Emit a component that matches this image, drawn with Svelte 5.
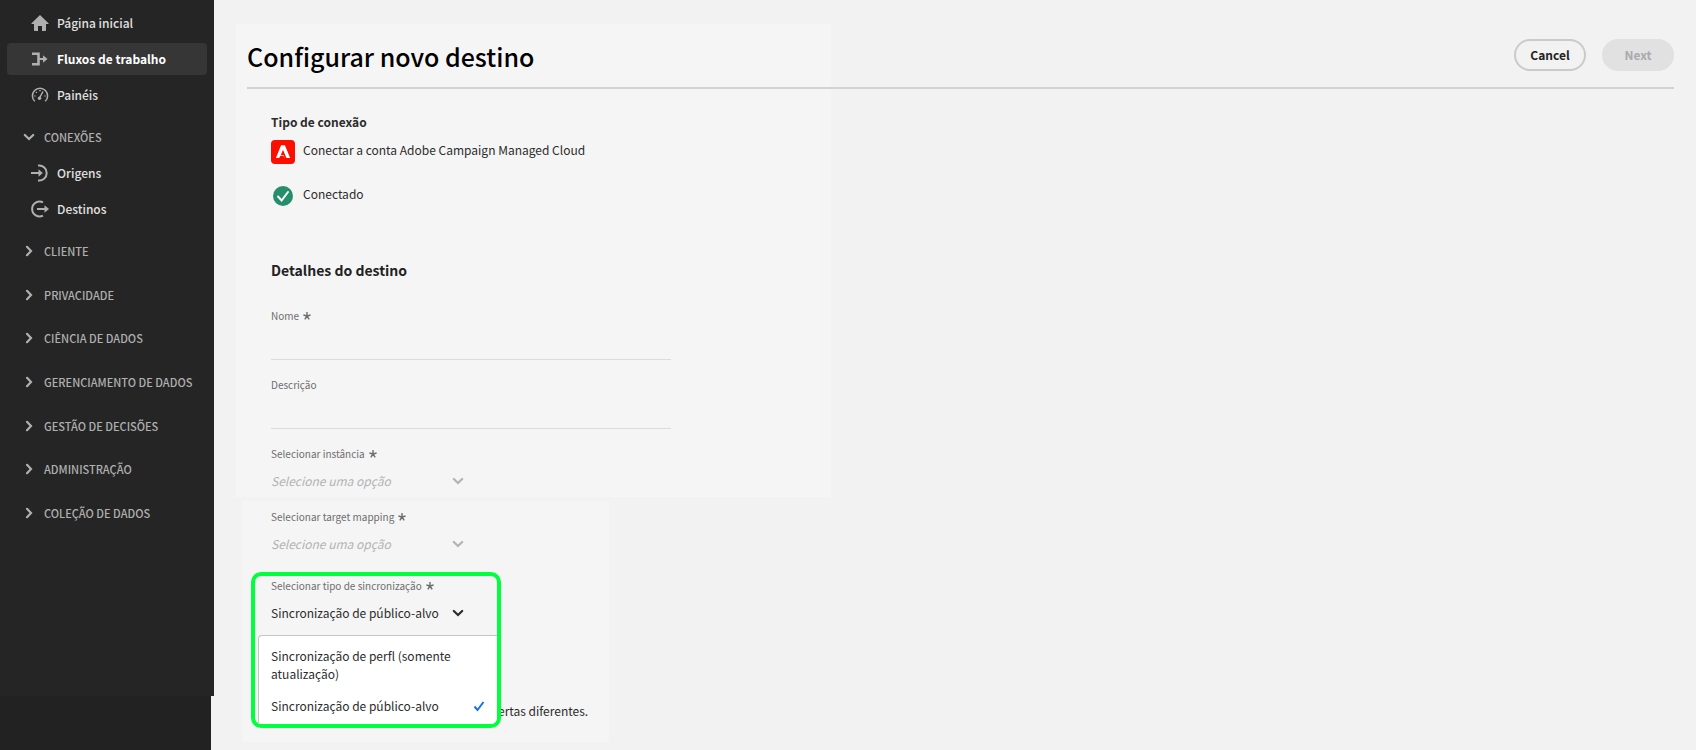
<script>
  const primary = [
    { name: 'Página inicial', icon: 'home' },
    { name: 'Fluxos de trabalho', icon: 'flow', active: true },
    { name: 'Painéis', icon: 'gauge' }
  ];
  const connections = [
    { name: 'Origens', icon: 'source' },
    { name: 'Destinos', icon: 'destination' }
  ];
  const sections = [
    'Cliente', 'Privacidade', 'Ciência de dados', 'Gerenciamento de dados',
    'Gestão de decisões', 'Administração', 'Coleção de dados'
  ];
  const options = ['Sincronização de perfl (somente atualização)', 'Sincronização de público-alvo'];
  let selected = $state(options[1]);
</script>

{#snippet chevron(dir)}
  <svg class="chevron {dir}" viewBox="0 0 12 12" aria-hidden="true"><path d="M1.800 4L6 8l4.200-4" /></svg>
{/snippet}

{#snippet star()}
  <svg class="star" viewBox="0 0 8 8" aria-hidden="true"><path d="M4 4V0M4 4L.4 3M4 4l3.6-1M4 4L1.8 7.4M4 4l2.2 3.4" /></svg>
{/snippet}

{#snippet navLink(item)}
  <a class="link" class:active={item.active} href="#{item.icon}">
    <svg class="icon" viewBox="0 0 18 18" aria-hidden="true">
      {#if item.icon === 'home'}
        <path class="solid" d="M9 1L.5 9.3c-.3.4-.1.8.4.8H3v6c0 .5.3.9.8.9H7v-5h4v5h3.200c.5 0 .8-.4.8-.9v-6h2.100c.5 0 .7-.4.4-.8z" />
      {:else if item.icon === 'flow'}
        <path class="thick" d="M1 3.800h6.500v10.400H1" /><path d="M8 9h5" /><path class="solid" d="M12 5.200L16.500 9 12 12.800z" />
      {:else if item.icon === 'gauge'}
        <path class="thin" d="M3.800 15.300A7.600 7.600 0 1 1 14.200 15.300M12 5.500L8.500 12M3.500 10h1M5 6l.8.7M9 4v1.200M13.500 10h1" /><circle class="solid" cx="8.500" cy="12.300" r="1.700" />
      {:else if item.icon === 'source'}
        <path d="M7 1.600a7.500 7.500 0 1 1 0 14.800M0 9h9" /><path class="solid" d="M7.500 5.200L11.800 9l-4.300 3.800z" />
      {:else}
        <path d="M12 2.300a7.500 7.500 0 1 0 0 13.400M6 9h9" /><path class="solid" d="M13.500 5.200L18 9l-4.500 3.800z" />
      {/if}
    </svg>
    <span>{item.name}</span>
  </a>
{/snippet}

<div class="page">
  <div class="side">
    <nav>
      {#each primary as item}{@render navLink(item)}{/each}
      <button class="section open">{@render chevron('down')}<span>Conexões</span></button>
      {#each connections as item}{@render navLink(item)}{/each}
      <div class="sections">
        {#each sections as name}
          <button class="section">{@render chevron('right')}<span>{name}</span></button>
        {/each}
      </div>
    </nav>
    <div class="foot"></div>
  </div>

  <main>
    <div class="tint upper"></div>
    <div class="tint lower"></div>
    <header>
      <h1>Configurar novo destino</h1>
      <div class="actions">
        <button class="pill">Cancel</button>
        <button class="pill next" disabled>Next</button>
      </div>
    </header>

    <div class="body">
      <h2>Tipo de conexão</h2>
      <div class="status">
        <svg class="badge" viewBox="0 0 24 24" aria-hidden="true">
          <rect width="24" height="24" rx="4" fill="#fa0f00" />
          <path fill="#fff" d="M10.100 5.300h3.800L19.200 18h-3.400c-.3 0-.5-.1-.6-.4L12.100 10c0-.1-.2-.1-.2 0l-2 4.800c0 .1 0 .2.200.2h2.100c.2 0 .3.100.3.200l.9 2.200c.1.300-.1.600-.4.600l-4.300-.5-.5.500H4.900z" />
          <path fill="#fa0f00" d="M9.300 15.800h3l1.600 2.700H8.200z" />
        </svg>
        <span>Conectar a conta Adobe Campaign Managed Cloud</span>
      </div>
      <div class="status connected">
        <svg class="badge" viewBox="0 0 24 24" aria-hidden="true">
          <circle cx="12" cy="12" r="10" fill="#268e6c" />
          <path d="M7 12.500l3.600 4 6.400-8.500" fill="none" stroke="#fff" stroke-width="2" stroke-linecap="round" />
        </svg>
        <span>Conectado</span>
      </div>

      <h3>Detalhes do destino</h3>
      <form>
        <div class="field text">
          <label for="name">Nome {@render star()}</label>
          <input id="name" type="text" />
        </div>
        <div class="field text">
          <label for="description">Descrição</label>
          <input id="description" type="text" />
        </div>
        <div class="field choice">
          <label for="instance">Selecionar instância {@render star()}</label>
          <div class="picker">
            <select id="instance"><option>Selecione uma opção</option></select>
            {@render chevron('down')}
          </div>
        </div>
        <div class="field choice wide">
          <label for="mapping">Selecionar target mapping {@render star()}</label>
          <div class="picker">
            <select id="mapping"><option>Selecione uma opção</option></select>
            {@render chevron('down')}
          </div>
        </div>
        <div class="field choice">
          <label for="sync">Selecionar tipo de sincronização {@render star()}</label>
          <button id="sync" class="picker chosen" type="button" aria-haspopup="listbox" aria-expanded="true">
            <span>{selected}</span>
            {@render chevron('down')}
          </button>
          <div class="outline">
            <div class="menu" role="listbox" aria-labelledby="sync">
              {#each options as option}
                <button class="option" type="button" role="option" aria-selected={option === selected} onclick={() => (selected = option)}>
                  <span>{option}</span>
                  {#if option === selected}
                    <svg class="tick" viewBox="0 0 12 12" aria-hidden="true"><path d="M1.500 6.500l3 3.500L10.500 2" /></svg>
                  {/if}
                </button>
              {/each}
            </div>
          </div>
        </div>
      </form>
      <p>ertas diferentes.</p>
    </div>
  </main>
</div>

<style>
  :global(body) { margin: 0; background: #f2f2f2; }
  * { box-sizing: border-box; }
  .page {
    display: flex;
    min-height: 100vh;
    font: 12px/18px "Noto Sans CJK SC", "Noto Sans", sans-serif;
    color: #2c2c2c;
  }
  button, input, select { font: inherit; color: inherit; background: none; border: 0; margin: 0; padding: 0; text-align: left; }
  svg { flex: none; fill: none; stroke: currentColor; stroke-width: 2; }
  .solid { fill: currentColor; stroke: none; }
  .thin { stroke-width: 1.500; }
  .thick { stroke-width: 2.600; }

  .side { flex: none; width: 214px; display: flex; flex-direction: column; }
  nav { display: flex; flex-direction: column; gap: 4px; padding: 7px 7px 161px; background: #252525; }
  .link { display: flex; align-items: center; gap: 8px; height: 32px; padding-left: 24px; border-radius: 4px; color: #e0e0e0; text-decoration: none; font-weight: 500; }
  .link.active { background: #363636; color: #fff; font-weight: 700; }
  .icon { width: 18px; height: 18px; color: #b0b0b0; }
  .section { display: flex; align-items: center; gap: 9px; height: 44px; padding-left: 16px; font-size: 11px; font-weight: 500; text-transform: uppercase; white-space: nowrap; color: #b0b0b0; }
  .section.open { height: 38px; padding-top: 6px; }
  .sections { display: grid; grid-template-rows: repeat(7, 1fr); height: 306px; }
  .sections .section { height: auto; }
  .foot { flex: 1; margin-right: 3px; background: #222; }
  .chevron { width: 12px; height: 12px; stroke-width: 2.200; stroke-linecap: round; }
  .chevron.right { transform: rotate(-90deg); }

  main { position: relative; flex: 1; min-width: 0; padding: 38px 22px 0 33px; }
  .tint { position: absolute; background: #f5f5f5; }
  .upper { left: 22px; top: 24px; width: 595px; height: 473px; }
  .lower { left: 28px; top: 501px; width: 367px; height: 241px; }
  header { position: relative; display: flex; justify-content: space-between; align-items: flex-start; height: 51px; border-bottom: 2px solid #d3d3d3; }
  h1 { margin: 0; font-size: 25px; line-height: 36px; font-weight: 500; color: #000; }
  .actions { display: flex; gap: 16px; margin-top: 1px; }
  .pill { width: 72px; height: 32px; border: 2px solid #cacaca; border-radius: 16px; text-align: center; font-weight: 700; color: #222; }
  .next { background: #e1e1e1; border-color: #e1e1e1; color: #aaa; }

  .body { position: relative; padding: 24px 24px 0; }
  h2 { margin: 0; font-size: 12px; line-height: 18px; font-weight: 700; }
  .status { display: flex; gap: 8px; align-items: flex-start; margin-top: 9px; height: 24px; line-height: 20px; }
  .connected { margin-top: 20px; }
  .badge { width: 24px; height: 24px; stroke: none; }
  h3 { margin: 50px 0 0; font-size: 14px; line-height: 24px; font-weight: 700; color: #222; }
  form { padding-top: 25px; }
  .field { position: relative; display: flex; flex-direction: column; }
  label { display: flex; align-items: center; gap: 4px; font-size: 10px; line-height: 18px; color: #6e6e6e; }
  .star { width: 8px; height: 8px; stroke-width: 1.400; }
  .text { max-width: 400px; height: 69px; }
  .text input { height: 35px; border-bottom: 1px solid #dcdcdc; }
  .choice { width: 193px; height: 63px; }
  .wide { height: 69px; }
  .picker { display: flex; align-items: center; justify-content: space-between; height: 36px; position: relative; color: #b3b3b3; }
  select { appearance: none; width: 100%; height: 32px; font-style: italic; }
  .picker select + :global(.chevron) { position: absolute; right: 0; pointer-events: none; }
  .chosen { color: #2c2c2c; }
  .outline { position: absolute; left: -20px; top: -5px; width: 250px; height: 156px; border: 4px solid #00ff3c; border-radius: 10px; pointer-events: none; overflow: hidden; padding: 59px 0 0 3px; }
  .menu { height: 100%; padding-top: 6px; background: #fff; border: 1px solid #c4c4c4; border-width: 1px 0 0 1px; border-top-left-radius: 4px; pointer-events: auto; }
  .option { display: flex; align-items: center; justify-content: space-between; width: 100%; padding: 5px 12px 9px; }
  .option span { max-width: 190px; }
  .tick { width: 12px; height: 12px; color: #1473e6; }
  p { margin: 62px 0 0 227px; padding-bottom: 20px; }
</style>
